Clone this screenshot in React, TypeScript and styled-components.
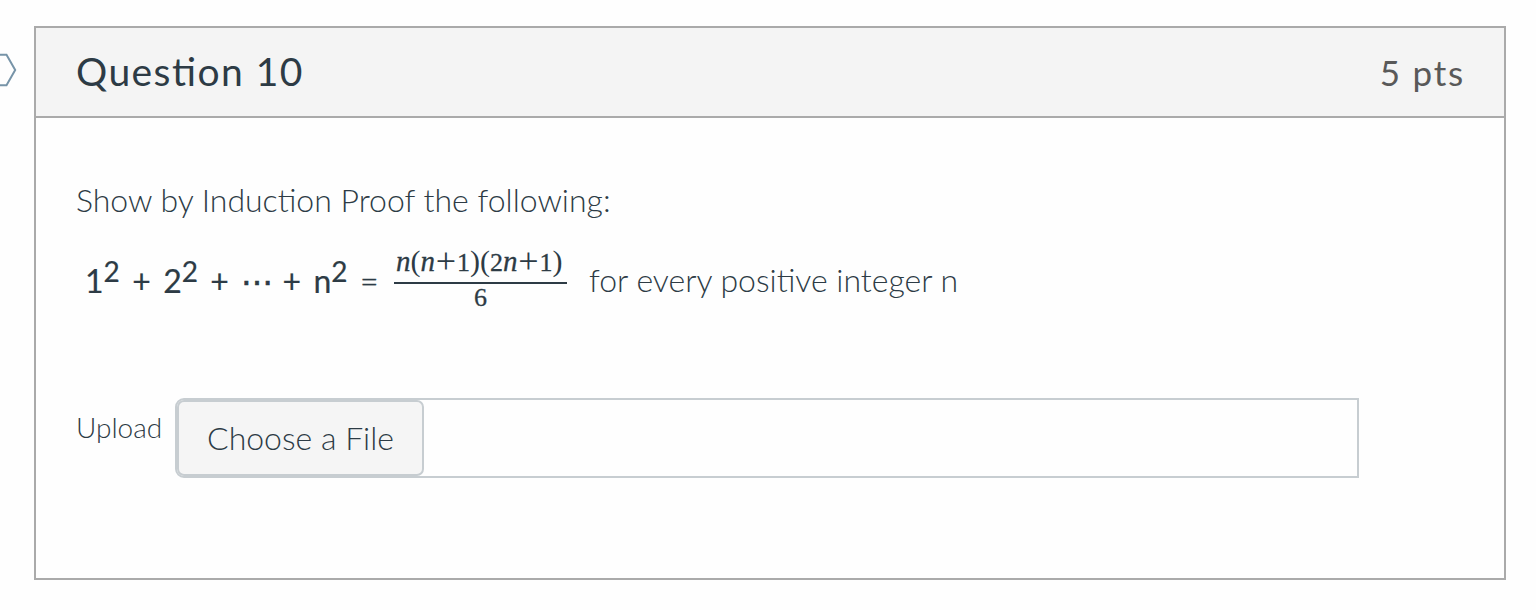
import React from "react";
import styled, { createGlobalStyle } from "styled-components";

const GlobalStyle = createGlobalStyle`
  * { box-sizing: border-box; }
  body {
    margin: 0;
    background: #fefefe;
    color: #2d3b45;
    font-family: Lato, "Liberation Sans", sans-serif;
    font-feature-settings: "liga" 1;
    overflow: hidden;
  }
`;

const Page = styled.main`
  display: flex;
  align-items: flex-start;
  height: 610px;
  padding: 26px 30px 0 0;
`;

const Flag = styled.svg`
  flex: none;
  width: 18px;
  height: 36px;
  margin: 26px 16px 0 0;
`;

const Card = styled.section`
  flex: 1;
  height: 554px;
  border: 2px solid #aaa;
`;

const Header = styled.header`
  display: flex;
  justify-content: space-between;
  height: 90px;
  padding: 0 39px 0 40px;
  background: #f4f4f4;
  border-bottom: 2px solid #aaa;
`;

const Title = styled.h2`
  margin: 0;
  font-size: 39px;
  font-weight: 400;
  line-height: 86px;
  letter-spacing: 1.45px;
`;

const Points = styled.span`
  font-size: 35px;
  line-height: 88px;
  letter-spacing: 1.8px;
  color: #595959;
`;

const Body = styled.div`
  display: flex;
  flex-direction: column;
  padding: 63px 0 0 40px;
  font-weight: 300;
`;

const Prompt = styled.p`
  margin: 0;
  font-size: 32px;
  line-height: 38px;
`;

const Statement = styled.div`
  display: flex;
  height: 68px;
  margin-top: 25px;
  padding-left: 9px;
  font-size: 32px;
`;

const Series = styled.div`
  flex: none;
  width: 309px;
  padding-top: 18px;
  line-height: 38px;
  font-weight: 400;
  word-spacing: 4.2px;
  white-space: pre;
  -webkit-text-stroke: 0.2px #2d3b45;
`;

const Power = styled.sup`
  display: inline-block;
  font-size: 28px;
  line-height: 0;
  vertical-align: 11px;
`;

const Dots = styled.span`
  letter-spacing: -3.3px;
  -webkit-text-stroke: 0.6px #2d3b45;
`;

const Equals = styled.span`
  font-weight: 300;
  -webkit-text-stroke: 0.4px #2d3b45;
`;

const Fraction = styled.div`
  display: flex;
  flex: none;
  flex-direction: column;
  align-items: center;
  width: 173px;
  font-family: "Liberation Serif", serif;
  font-size: 26px;
  font-weight: 400;
  -webkit-text-stroke: 0.3px #2d3b45;
`;

const Numerator = styled.div`
  flex: none;
  width: 100%;
  height: 40px;
  padding-left: 2px;
  border-bottom: 2px solid #2d3b45;
  line-height: 38px;
  white-space: nowrap;
`;

const Variable = styled.i`
  font-size: 29px;
  line-height: 0;
`;

const Paren = styled.span`
  font-size: 30px;
  line-height: 0;
  -webkit-text-stroke: 0;
`;

const Plus = styled.span`
  display: inline-block;
  width: 22px;
  font-size: 36px;
  line-height: 0;
  text-align: center;
  vertical-align: -2px;
  -webkit-text-stroke: 0;
`;

const Denominator = styled.div`
  flex: none;
  line-height: 27px;
`;

const Clause = styled.span`
  margin-left: 22px;
  padding-top: 17px;
  line-height: 38px;
`;

const UploadRow = styled.div`
  display: flex;
  margin-top: 86px;
`;

const UploadLabel = styled.label`
  width: 99px;
  padding-top: 12px;
  font-size: 28px;
  line-height: 34px;
`;

const FileField = styled.div`
  width: 1184px;
  height: 80px;
  border: 2px solid #c7cdd1;
  border-radius: 9px 0 0 9px;
`;

const FileButton = styled.button`
  display: block;
  width: 247px;
  height: 76px;
  padding: 0;
  border: 2px solid #c7cdd1;
  border-radius: 7px;
  background: #f5f5f5;
  color: inherit;
  font: 300 32px/72px Lato, "Liberation Sans", sans-serif;
`;

export default function App() {
  return (
    <>
      <GlobalStyle />
      <Page>
        <Flag viewBox="0 0 18 36" fill="none" stroke="#7794a8" strokeWidth="2">
          <path d="M-2 2.8H6.5L15.2 18L6.5 33.2H-2" />
        </Flag>
        <Card>
          <Header>
            <Title>Question 10</Title>
            <Points>5 pts</Points>
          </Header>
          <Body>
            <Prompt>Show by Induction Proof the following:</Prompt>
            <Statement>
              <Series>
                1<Power>2</Power> + 2<Power>2</Power> + <Dots>⋯</Dots> + n<Power>2</Power> <Equals>=</Equals>
              </Series>
              <Fraction>
                <Numerator>
                  <Variable>n</Variable><Paren>(</Paren><Variable>n</Variable><Plus>+</Plus>1<Paren>)(</Paren>2<Variable>n</Variable><Plus>+</Plus>1<Paren>)</Paren>
                </Numerator>
                <Denominator>6</Denominator>
              </Fraction>
              <Clause>for every positive integer n</Clause>
            </Statement>
            <UploadRow>
              <UploadLabel>Upload</UploadLabel>
              <FileField>
                <FileButton type="button">Choose a File</FileButton>
              </FileField>
            </UploadRow>
          </Body>
        </Card>
      </Page>
    </>
  );
}
